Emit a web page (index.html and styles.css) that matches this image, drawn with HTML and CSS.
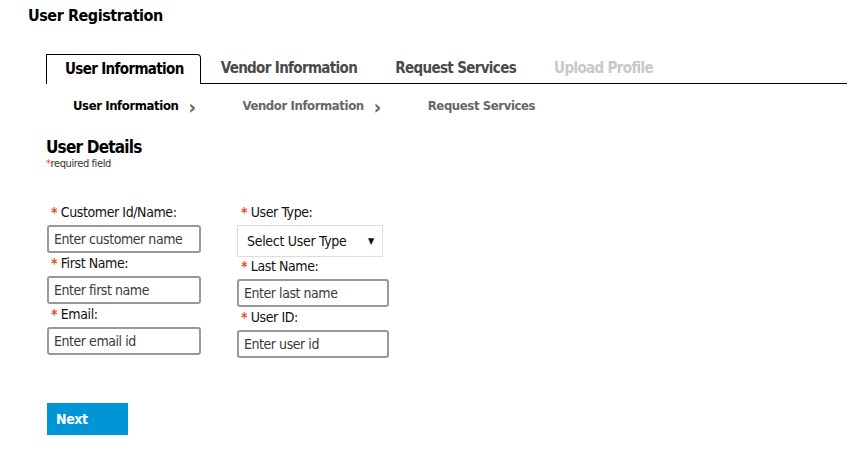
FILE: index.html
```html
<!DOCTYPE html>
<html>
<head>
<meta charset="utf-8">
<link rel="stylesheet" href="styles.css">
</head>
<body>
<div class="page">
  <h1 class="title">User Registration</h1>
  <div class="tabs">
    <div class="tab active">User Information</div>
    <div class="tab">Vendor Information</div>
    <div class="tab">Request Services</div>
    <div class="tab disabled">Upload Profile</div>
  </div>
  <div class="steps">
    <span class="step current">User Information</span><span class="chev">&#x203A;</span>
    <span class="step">Vendor Information</span><span class="chev">&#x203A;</span>
    <span class="step">Request Services</span>
  </div>
  <h2 class="section">User Details</h2>
  <div class="req"><span class="star">*</span>required field</div>
  <div class="form">
    <div class="col">
      <label class="lbl"><span class="star">*</span> Customer Id/Name:</label>
      <input class="inp" type="text" placeholder="Enter customer name">
      <label class="lbl"><span class="star">*</span> First Name:</label>
      <input class="inp" type="text" placeholder="Enter first name">
      <label class="lbl"><span class="star">*</span> Email:</label>
      <input class="inp" type="text" placeholder="Enter email id">
    </div>
    <div class="col col2">
      <label class="lbl"><span class="star">*</span> User Type:</label>
      <div class="select"><span>Select User Type</span><span class="arrow">&#9660;</span></div>
      <label class="lbl"><span class="star">*</span> Last Name:</label>
      <input class="inp" type="text" placeholder="Enter last name">
      <label class="lbl"><span class="star">*</span> User ID:</label>
      <input class="inp" type="text" placeholder="Enter user id">
    </div>
  </div>
  <div class="actions"><button class="next">Next</button></div>
</div>
</body>
</html>
```
FILE: styles.css
```css
* { box-sizing: border-box; }
html, body { margin: 0; padding: 0; background: #fff; }
body { font-family: "DejaVu Sans Condensed", "Liberation Sans", sans-serif; color: #000; }
.page { padding: 5px 7px 0 28px; }
.title { margin: 0; font-size: 16px; letter-spacing: -0.45px; font-weight: bold; line-height: 22px; }
.tabs { display: flex; margin: 27px 0 0 18px; border-bottom: 1px solid #000; height: 30px; align-items: stretch; }
.tab { font-size: 15px; letter-spacing: -0.65px; font-weight: bold; color: #4a4a4a; padding: 0 19px; line-height: 28px; }
.tab.active { color: #000; border: 1px solid #000; border-bottom: none; border-top-right-radius: 4px; background: #fff; height: 30px; padding: 0 16px 0 18px; margin-right: 1px; }
.tab.disabled { color: #c8c8c8; }
.steps { display: flex; align-items: center; margin: 8px 0 0 45px; height: 26px; font-size: 13px; letter-spacing: -0.4px; font-weight: bold; }
.step { color: #666; }
.step.current { color: #000; }
.chev { color: #666; font-size: 20px; line-height: 20px; margin: 3px 47px 0 10px; font-weight: bold; }
.section { margin: 19px 0 0 18px; font-size: 17px; letter-spacing: -0.8px; font-weight: bold; line-height: 20px; }
.req { margin: 0 0 0 18px; font-size: 11px; letter-spacing: -0.4px; color: #333; line-height: 14px; }
.star { color: #e84c22; }
.form { display: flex; margin: 31px 0 0 19px; gap: 36px; }
.col { display: flex; flex-direction: column; width: 154px; }
.col2 { width: 152px; }
.lbl { display: block; font-size: 14px; letter-spacing: -0.4px; line-height: 20px; height: 20px; margin-bottom: 3px; padding-left: 4px; color: #111; }
.lbl .star { font-weight: bold; }
.inp { width: 100%; height: 28px; border: 2px solid #999; border-radius: 3px; padding: 0 5px; font-family: inherit; font-size: 14px; letter-spacing: -0.45px; color: #333; outline: none; }
.inp::placeholder { color: #3a3a3a; opacity: 1; }
.select { width: 146px; height: 32px; border: 1px solid #ddd; display: flex; align-items: center; justify-content: space-between; padding: 0 8px 0 9px; font-size: 14px; letter-spacing: -0.3px; color: #111; margin-bottom: -1px; }
.arrow { font-size: 9px; }
.actions { margin: 45px 0 0 19px; }
.next { width: 81px; height: 32px; background: #0096d6; color: #fff; border: none; font-family: inherit; font-weight: bold; font-size: 14px; letter-spacing: -0.4px; text-align: left; padding: 0 9px; }
```
